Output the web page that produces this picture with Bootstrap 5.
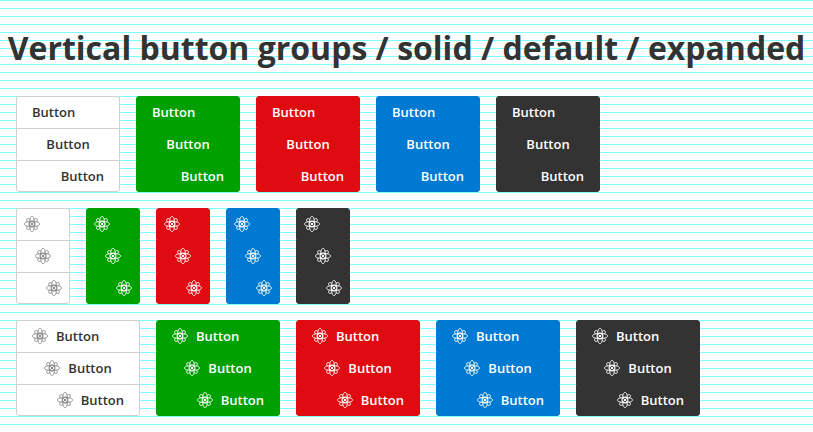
<!DOCTYPE html>
<html lang="en">
<head>
<meta charset="utf-8">
<meta name="viewport" content="width=device-width, initial-scale=1">
<title>Vertical button groups</title>
<link href="https://cdn.jsdelivr.net/npm/bootstrap@5.3.0/dist/css/bootstrap.min.css" rel="stylesheet">
<style>
  body {
    font-family: "Open Sans", "Noto Sans", sans-serif;
    color: #333;
    background: repeating-linear-gradient(to bottom, #80ffff 0, #80ffff 1px, #fff 1px, #fff 8px);
  }
  .page-title { font-size: 32px; line-height: 48px; padding: 24px 0; }
  .stack { border-radius: 3px; }
  .stack .btn {
    --bs-btn-font-size: 13px;
    --bs-btn-font-weight: 600;
    --bs-btn-line-height: 20px;
    --bs-btn-padding-x: 15px;
    --bs-btn-padding-y: 5px;
    --bs-btn-border-radius: 3px;
    --bs-btn-color: #fff;
    --bs-btn-hover-color: #fff;
    --bs-btn-bg: var(--tone);
    --bs-btn-border-color: var(--tone);
    --bs-btn-hover-bg: var(--tone);
    --bs-btn-hover-border-color: var(--tone);
    height: 32px;
  }
  .stack.btn-group-vertical > .btn:not(:first-child) { margin-top: 0; }
  .label-only { width: 104px; }
  .icon-only { width: 54px; }
  .icon-label { width: 124px; }
  .icon-only .btn { --bs-btn-padding-x: 7px; }
  .tone-plain { --tone: #fff; }
  .tone-green { --tone: #00a000; }
  .tone-red { --tone: #e00b10; }
  .tone-blue { --tone: #0079d3; }
  .tone-dark { --tone: #333; }
  .stack.tone-plain .btn {
    --bs-btn-color: #333;
    --bs-btn-hover-color: #333;
    --bs-btn-border-color: #d0d0d0;
    --bs-btn-hover-border-color: #d0d0d0;
  }
  .stack.tone-plain .btn:not(:last-child) { border-bottom-color: #fff; }
  .flower { width: 16px; height: 16px; flex: none; fill: none; stroke: currentColor; }
  .tone-plain .flower { color: #888; }
</style>
</head>
<body>
<svg class="d-none" aria-hidden="true">
  <symbol id="flower" viewBox="0 0 32 32">
    <g stroke-width="1.900">
      <path id="long-petal" d="M12 14C10.500 8 12.500 1 16 1S21.500 8 20 14"/>
      <use href="#long-petal" transform="rotate(90 16 16)"/>
      <use href="#long-petal" transform="rotate(180 16 16)"/>
      <use href="#long-petal" transform="rotate(270 16 16)"/>
      <path id="corner-petal" d="M19.500 7.500C22 5.200 24.500 4.500 26 6S26.800 10 24.500 12.500"/>
      <use href="#corner-petal" transform="rotate(90 16 16)"/>
      <use href="#corner-petal" transform="rotate(180 16 16)"/>
      <use href="#corner-petal" transform="rotate(270 16 16)"/>
      <circle cx="16" cy="16" r="5.800" stroke-width="2.200"/>
    </g>
    <circle cx="16" cy="16" r="2.500" fill="currentColor" stroke="none"/>
  </symbol>
</svg>
<main>
  <h1 class="page-title fw-bold text-center m-0">Vertical button groups / solid / default / expanded</h1>
  <div class="d-flex flex-column gap-3 px-3 pb-3" id="samples"></div>
</main>
<script src="https://cdn.jsdelivr.net/npm/bootstrap@5.3.0/dist/js/bootstrap.bundle.min.js"></script>
<script>
  const tones = ['plain', 'green', 'red', 'blue', 'dark'];
  const aligns = ['start', 'center', 'end'];
  const icon = '<svg class="flower" aria-hidden="true"><use href="#flower"/></svg>';
  const kinds = [
    ['label-only', '<span>Button</span>', ''],
    ['icon-only', icon, ' aria-label="Icon button"'],
    ['icon-label', icon + '<span>Button</span>', '']
  ];
  document.getElementById('samples').innerHTML = kinds.map(([kind, content, attrs]) =>
    '<div class="d-flex flex-wrap gap-3">' + tones.map(tone =>
      `<div class="btn-group-vertical stack ${kind} tone-${tone}" role="group" aria-label="${tone}">` +
      aligns.map(align =>
        `<button type="button" class="btn d-flex align-items-center gap-2 justify-content-${align}"${attrs}>${content}</button>`
      ).join('') + '</div>').join('') + '</div>').join('');
</script>
</body>
</html>
